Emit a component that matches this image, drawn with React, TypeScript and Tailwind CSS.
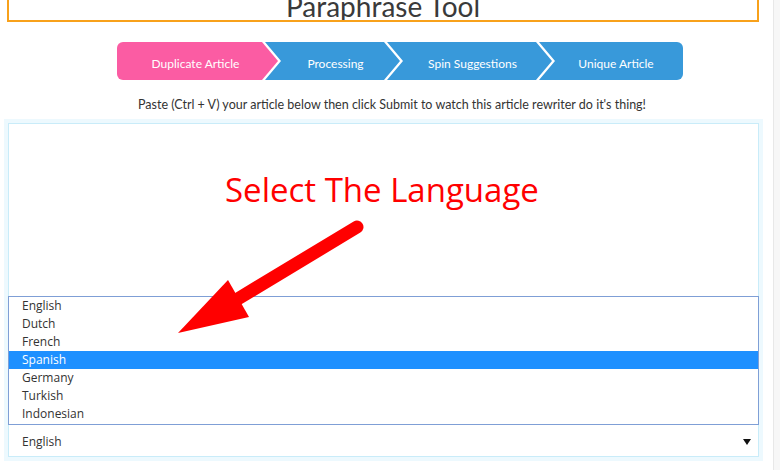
import React from 'react'

const steps = [
  { label: 'Duplicate Article', w: 'w-[161px]', bg: 'bg-[#fb5ca3]', clip: '[clip-path:polygon(0_0,calc(100%-16px)_0,100%_50%,calc(100%-16px)_100%,0_100%)]', ml: '' },
  { label: 'Processing', w: 'w-[135px]', bg: 'bg-[#3899da]', clip: '[clip-path:polygon(0_0,calc(100%-16px)_0,100%_50%,calc(100%-16px)_100%,0_100%,16px_50%)]', ml: '-ml-[13px]' },
  { label: 'Spin Suggestions', w: 'w-[165px]', bg: 'bg-[#3899da]', clip: '[clip-path:polygon(0_0,calc(100%-16px)_0,100%_50%,calc(100%-16px)_100%,0_100%,16px_50%)]', ml: '-ml-[13px]' },
  { label: 'Unique Article', w: 'flex-1', bg: 'bg-[#3899da]', clip: '[clip-path:polygon(0_0,100%_0,100%_100%,0_100%,16px_50%)]', ml: '-ml-[13px]' },
]

const languages = ['English', 'Dutch', 'French', 'Spanish', 'Germany', 'Turkish', 'Indonesian']

export default function App() {
  return (
    <div className="relative flex w-[780px] h-[470px] overflow-hidden bg-white font-['Open_Sans',sans-serif]">
      <div className="w-[773px]">
        {/* Title box (top is scrolled off) */}
        <div className="ml-[7px] w-[752px] h-[22px] border-2 border-t-0 border-[#f8a11b] overflow-hidden flex justify-center">
          <h1 className="-mt-[12px] text-[28px] leading-[36px] text-[#3a3a3a] font-['Lato',sans-serif]">Paraphrase Tool</h1>
        </div>

        {/* Progress steps */}
        <div className="mt-[20px] ml-[117px] w-[566px] h-[38px] flex rounded-md overflow-hidden font-['Lato',sans-serif]">
          {steps.map((s, i) => (
            <div
              key={s.label}
              className={`${s.w} ${s.bg} ${s.clip} ${s.ml} h-full flex items-center justify-center pt-[6px] text-white text-[12px] ${i > 0 ? 'pl-[10px]' : ''} ${i < 3 ? 'pr-[4px]' : ''}`}
            >
              {s.label}
            </div>
          ))}
        </div>

        <p className="mt-[17px] h-4 pl-[11px] text-center text-[12.5px] leading-4 text-[#333] font-['Lato',sans-serif]">
          Paste (Ctrl + V) your article below then click Submit to watch this article rewriter do it's thing!
        </p>

        {/* Editor box */}
        <div className="mt-[10px] ml-[8px] w-[751px] border border-[#c9ecf9] shadow-[0_0_0_4px_#edf9fe]">
          <div className="h-[172px]" />
          <div className="-mx-px border border-[#7f9fd6] pb-px">
            {languages.map((l) => (
              <div
                key={l}
                className={`h-[18px] pl-[13px] text-[12px] leading-[18px] ${l === 'Spanish' ? 'bg-[#1e90ff] text-white' : 'text-[#333]'}`}
              >
                {l}
              </div>
            ))}
          </div>
          <div className="h-[31px] pt-[2px] pl-[13px] pr-[7px] flex items-center justify-between text-[12px] text-[#333]">
            <span>English</span>
            <svg width="8" height="6" viewBox="0 0 8 6">
              <polygon points="0,0 8,0 4,6" fill="#111" />
            </svg>
          </div>
        </div>
      </div>

      {/* scrollbar track */}
      <div className="flex-1 bg-[#f7f7f7] border-l border-[#e8e8e8]" />

      {/* annotation */}
      <div className="absolute left-[225px] top-[167px] text-[33px] leading-[46px] text-[#ff0000] font-['Open_Sans',sans-serif]">
        Select The Language
      </div>
      <svg className="absolute left-0 top-0 pointer-events-none" width="780" height="470" viewBox="0 0 780 470">
        <line x1="357" y1="227" x2="236" y2="300" stroke="#ff0000" strokeWidth="13" strokeLinecap="round" />
        <polygon points="178,333 228,280 249,317" fill="#ff0000" />
      </svg>
    </div>
  )
}
